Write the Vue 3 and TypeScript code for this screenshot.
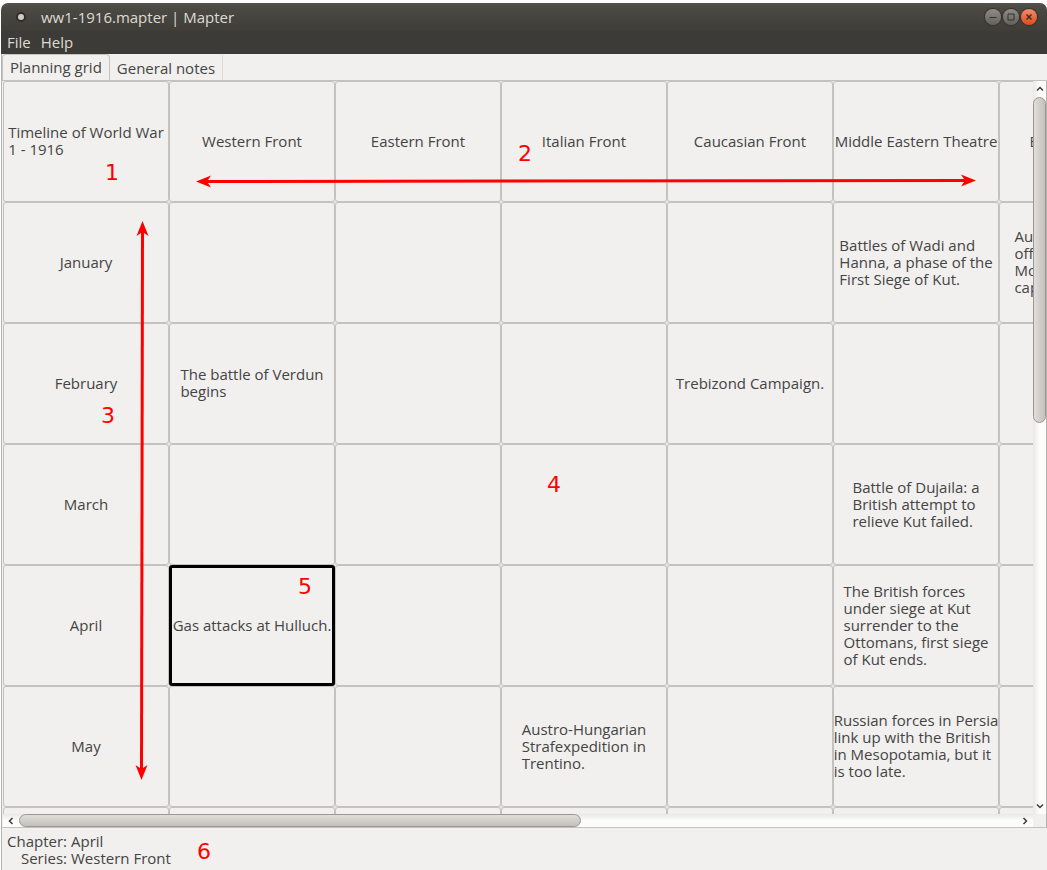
<script setup lang="ts">
import { computed, ref } from 'vue'

type Row = { chapter: string; cells: Record<number, string> }

const title = 'Timeline of World War\n1 - 1916'
const series = [
  'Western Front',
  'Eastern Front',
  'Italian Front',
  'Caucasian Front',
  'Middle Eastern Theatre',
  'Balkan Theatre',
]
const rows: Row[] = [
  {
    chapter: 'January',
    cells: {
      4: 'Battles of Wadi and\nHanna, a phase of the\nFirst Siege of Kut.',
      5: 'Austro-Hungarian\noffensive against\nMontenegro, which\ncapitulates.',
    },
  },
  { chapter: 'February', cells: { 0: 'The battle of Verdun\nbegins', 3: 'Trebizond Campaign.' } },
  { chapter: 'March', cells: { 4: 'Battle of Dujaila: a\nBritish attempt to\nrelieve Kut failed.' } },
  {
    chapter: 'April',
    cells: {
      0: 'Gas attacks at Hulluch.',
      4: 'The British forces\nunder siege at Kut\nsurrender to the\nOttomans, first siege\nof Kut ends.',
    },
  },
  {
    chapter: 'May',
    cells: {
      2: 'Austro-Hungarian\nStrafexpedition in\nTrentino.',
      4: 'Russian forces in Persia\nlink up with the British\nin Mesopotamia, but it\nis too late.',
    },
  },
  { chapter: '', cells: {} },
]

const tabs = ['Planning grid', 'General notes']
const activeTab = ref(0)
const selected = ref({ row: 3, col: 0 })
const chapterName = computed(() => rows[selected.value.row].chapter)
const seriesName = computed(() => series[selected.value.col])

const notes = [
  { n: 1, x: 105, y: 180 },
  { n: 2, x: 518, y: 161 },
  { n: 3, x: 101, y: 423 },
  { n: 4, x: 547, y: 492 },
  { n: 5, x: 298, y: 594 },
  { n: 6, x: 197, y: 859 },
]
</script>

<template>
  <div class="screen">
    <div class="window">
      <header class="titlebar">
        <span class="app-dot"></span>
        <h1>ww1-1916.mapter | Mapter</h1>
        <div class="controls">
          <button type="button" aria-label="Minimize">
            <svg viewBox="0 0 16 16"><path d="M4.500 8.500h7" /></svg>
          </button>
          <button type="button" aria-label="Maximize">
            <svg viewBox="0 0 16 16"><path d="M5 5h6v6H5z" /></svg>
          </button>
          <button type="button" class="close" aria-label="Close">
            <svg viewBox="0 0 16 16"><path d="M5.500 5.500l5 5M10.500 5.500l-5 5" /></svg>
          </button>
        </div>
      </header>
      <nav class="menubar">
        <button type="button">File</button>
        <button type="button">Help</button>
      </nav>
      <div class="tabs" role="tablist">
        <button
          v-for="(tab, i) in tabs"
          :key="tab"
          type="button"
          role="tab"
          :aria-selected="activeTab === i"
          :class="{ active: activeTab === i }"
          @click="activeTab = i"
        >{{ tab }}</button>
      </div>

      <main class="pane">
        <div class="viewport">
          <table>
            <thead>
              <tr>
                <th scope="col"><div class="cell"><span>{{ title }}</span></div></th>
                <th v-for="s in series" :key="s" scope="col"><div class="cell"><span>{{ s }}</span></div></th>
              </tr>
            </thead>
            <tbody>
              <tr v-for="(row, r) in rows" :key="r">
                <th scope="row"><div class="cell"><span>{{ row.chapter }}</span></div></th>
                <td v-for="(s, c) in series" :key="s" @click="selected = { row: r, col: c }">
                  <div class="cell" :class="{ selected: selected.row === r && selected.col === c }">
                    <span>{{ row.cells[c] }}</span>
                  </div>
                </td>
              </tr>
            </tbody>
          </table>
        </div>
        <div class="bar vertical">
          <button type="button" aria-label="Scroll up">
            <svg viewBox="0 0 8 8"><path d="M1 5.500l3-3 3 3" /></svg>
          </button>
          <div class="track"><div class="thumb"></div></div>
          <button type="button" aria-label="Scroll down">
            <svg viewBox="0 0 8 8"><path d="M1 2.500l3 3 3-3" /></svg>
          </button>
        </div>
        <div class="bar horizontal">
          <button type="button" aria-label="Scroll left">
            <svg viewBox="0 0 8 8"><path d="M5.500 1l-3 3 3 3" /></svg>
          </button>
          <div class="track"><div class="thumb"></div></div>
          <button type="button" aria-label="Scroll right">
            <svg viewBox="0 0 8 8"><path d="M2.500 1l3 3-3 3" /></svg>
          </button>
        </div>
      </main>

      <footer class="status">
        <dl>
          <dt>Chapter:</dt>
          <dd>{{ chapterName }}</dd>
          <dt>Series:</dt>
          <dd>{{ seriesName }}</dd>
        </dl>
      </footer>
    </div>

    <svg class="annotations">
      <g class="shaft">
        <path d="M206 181.500L966 180.500" />
        <path d="M142.500 232L141.500 770" />
      </g>
      <g class="head">
        <path d="M196 181.500l15-6-4 6 4 6z" />
        <path d="M976 180.500l-15-6 4 6-4 6z" />
        <path d="M142.500 221l-6 15 6-4 6 4z" />
        <path d="M141.500 780l-6-15 6 4 6-4z" />
      </g>
      <text v-for="note in notes" :key="note.n" :x="note.x" :y="note.y">{{ note.n }}</text>
    </svg>
  </div>
</template>

<style>
body {
  background: #fff;
}
</style>

<style scoped>
.screen {
  position: relative;
  box-sizing: border-box;
  height: 100vh;
  padding: 3px 0 0 1px;
  overflow: hidden;
  background: #fff;
  color: #444;
  font: 15px/17px "Open Sans", "Noto Sans", sans-serif;
}
button {
  padding: 0;
  border: 0;
  background: none;
  color: inherit;
  font: inherit;
}
.window {
  display: flex;
  flex-direction: column;
  box-sizing: border-box;
  height: 100%;
  background: #f1f0ee;
  border-radius: 7px 7px 0 0;
  overflow: hidden;
}
.titlebar {
  display: flex;
  flex: none;
  align-items: center;
  height: 28px;
  padding: 0 10px 0 15px;
  background: linear-gradient(#53524c, #4a4943 20%, #3e3d38);
  color: #dfdbd2;
}
.app-dot {
  box-sizing: border-box;
  width: 10px;
  height: 10px;
  border: 2px solid #2f2e2a;
  border-radius: 50%;
  background: #d0ccc4;
}
.titlebar h1 {
  flex: 1;
  margin: 0 0 0 15px;
  font-size: 15px;
  font-weight: 500;
}
.controls {
  display: flex;
  gap: 2px;
}
.controls button {
  width: 16px;
  height: 16px;
  border-radius: 50%;
  background: linear-gradient(#8f8d85, #62615a);
  box-shadow: 0 0 1px 1px #33322e;
}
.controls .close {
  background: linear-gradient(#f68b68, #e04a19);
}
.controls svg {
  display: block;
  fill: none;
  stroke: #33322e;
}
.controls .close svg {
  stroke-width: 1.5;
}
.menubar {
  display: flex;
  flex: none;
  gap: 10px;
  height: 23px;
  padding: 0 6px;
  background: #3c3b37;
  color: #dfdbd2;
}
.tabs {
  display: flex;
  flex: none;
  align-items: flex-end;
  height: 26px;
  border-bottom: 1px solid #c4c2be;
  border-left: 1px solid #b5b3af;
}
.tabs button {
  box-sizing: border-box;
  height: 25px;
  padding: 2px 7px 0;
  border-right: 1px solid #dedcd9;
}
.tabs .active {
  height: 26px;
  padding-top: 0;
  border: 1px solid #c4c2be;
  border-bottom: 0;
  border-radius: 4px 4px 0 0;
}
.pane {
  display: grid;
  flex: 1;
  grid-template-columns: minmax(0, 1fr) 13px;
  grid-template-rows: minmax(0, 1fr) 13px;
  min-height: 0;
  padding-left: 1px;
  border: 1px solid #b5b3af;
  border-top: 0;
  border-bottom-color: #c4c2be;
}
.viewport {
  overflow: hidden;
}
table {
  width: 1162px;
  border-collapse: collapse;
  table-layout: fixed;
}
th,
td {
  padding: 0;
  background: #e5e4e2;
  font-weight: 400;
}
.cell {
  display: flex;
  align-items: center;
  justify-content: center;
  box-sizing: border-box;
  height: 121px;
  padding-bottom: 1px;
  border: 1px solid #c4c2be;
  border-radius: 3px;
  background: #f1f0ee;
  text-align: left;
  white-space: pre;
}
.cell.selected {
  border: 3px solid #000;
}
.bar {
  display: flex;
}
.bar button {
  display: flex;
  flex: none;
  align-items: center;
  justify-content: center;
  width: 16px;
  height: 13px;
}
.bar svg {
  width: 8px;
  height: 8px;
  fill: none;
  stroke: #3c3c3c;
  stroke-width: 1.5;
}
.track {
  flex: 1;
}
.thumb {
  box-sizing: border-box;
  border: 1px solid #9b9791;
  border-radius: 7px;
}
.vertical {
  flex-direction: column;
  background: linear-gradient(90deg, #e9e8e6, #fcfcfb 50%);
}
.vertical button {
  width: 13px;
  height: 16px;
}
.vertical .thumb {
  height: 46.5%;
  background: linear-gradient(90deg, #e0ddda, #c4c0bb);
}
.horizontal {
  background: linear-gradient(#e9e8e6, #fcfcfb 50%);
}
.horizontal .thumb {
  width: 56.3%;
  height: 13px;
  background: linear-gradient(#e0ddda, #c4c0bb);
}
.status {
  flex: none;
  height: 37px;
  padding: 5px 5px 0;
  border-left: 1px solid #b5b3af;
}
.status dl {
  display: grid;
  grid-template-columns: max-content 1fr;
  column-gap: 4px;
  margin: 0;
}
.status dt {
  text-align: right;
}
.status dd {
  margin: 0;
}
.annotations {
  position: absolute;
  top: 0;
  left: 0;
  width: 100%;
  height: 100%;
  overflow: visible;
  fill: #f00;
  font: 22px "DejaVu Sans", sans-serif;
  pointer-events: none;
}
.shaft {
  stroke: #f00;
  stroke-width: 3;
}
</style>
